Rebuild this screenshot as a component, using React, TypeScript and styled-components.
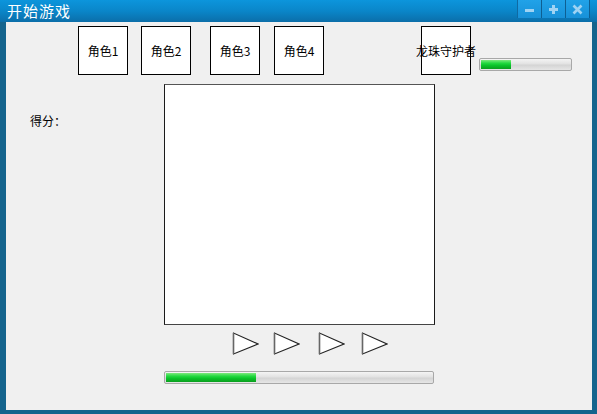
import React from "react";
import styled, { createGlobalStyle } from "styled-components";

const Global = createGlobalStyle`
  html, body { margin: 0; padding: 0; background: #ffffff; }
  body { font-family: "Noto Sans CJK SC", "Noto Sans", sans-serif; }
`;

const Window = styled.div`
  width: 597px;
  height: 414px;
  background: #15648d;
  display: flex;
  flex-direction: column;
  overflow: hidden;
`;

const TitleBar = styled.div`
  height: 22px;
  flex-shrink: 0;
  display: flex;
  justify-content: space-between;
  align-items: flex-start;
  background: linear-gradient(to bottom, #0c95dc 0%, #0a86c9 50%, #0b6ea9 100%);
`;

const Title = styled.div`
  color: #ffffff;
  font-size: 15px;
  line-height: 22px;
  height: 22px;
  letter-spacing: 1px;
  padding-left: 7px;
`;

const Controls = styled.div`
  display: flex;
  height: 18px;
  margin-right: 7px;
  border-left: 1px solid #0f6aa3;
`;

const CtrlButton = styled.div`
  width: 23px;
  height: 18px;
  border-right: 1px solid #0e5f92;
  background: linear-gradient(to bottom, #21a2e8 0%, #1891d8 100%);
  display: flex;
  align-items: center;
  justify-content: center;
`;

const Body = styled.div`
  flex: 1;
  margin: 0 5px 4px 6px;
  background: #f0f0f0;
  display: flex;
  flex-direction: column;
`;

const TopRow = styled.div`
  display: flex;
  align-items: flex-start;
  padding: 4px 0 0 72px;
`;

const RoleBox = styled.div<{ $ml: number }>`
  width: 50px;
  height: 49px;
  box-sizing: border-box;
  margin-left: ${(p) => p.$ml}px;
  border: 1px solid #000000;
  background: #ffffff;
  display: flex;
  align-items: center;
  justify-content: center;
  font-size: 12px;
  color: #000000;
  white-space: nowrap;
  overflow: visible;
  flex-shrink: 0;
`;

const Track = styled.div<{ $w: number; $ml?: number; $mt?: number }>`
  width: ${(p) => p.$w}px;
  height: 13px;
  box-sizing: border-box;
  margin-left: ${(p) => p.$ml ?? 0}px;
  margin-top: ${(p) => p.$mt ?? 0}px;
  border: 1px solid #a8a8a8;
  border-radius: 2px;
  background: linear-gradient(to bottom, #f4f4f4 0%, #e2e2e2 45%, #d4d4d4 55%, #e6e6e6 100%);
  padding: 1px;
  flex-shrink: 0;
`;

const Fill = styled.div`
  height: 100%;
  background: linear-gradient(to bottom, #7ee87e 0%, #23d940 35%, #0bc42a 60%, #0a9e1e 100%);
`;

const Middle = styled.div`
  display: flex;
  align-items: flex-start;
  margin-top: 9px;
`;

const ScoreCol = styled.div`
  width: 158px;
  flex-shrink: 0;
  padding: 29px 0 0 24px;
  box-sizing: border-box;
  font-size: 12px;
  line-height: 16px;
  color: #000000;
`;

const Canvas = styled.div`
  width: 271px;
  height: 241px;
  box-sizing: border-box;
  background: #ffffff;
  border: 1px solid #1a1a1a;
  border-top-color: #555555;
  border-bottom-color: #444444;
`;

const TriRow = styled.div`
  display: flex;
  margin-top: 7px;
  padding-left: 226px;
`;

const TriWrap = styled.div<{ $ml: number }>`
  width: 27px;
  height: 23px;
  margin-left: ${(p) => p.$ml}px;
`;

const BottomRow = styled.div`
  display: flex;
  margin-top: 16px;
`;

const Triangle = () => (
  <svg width="27" height="23" viewBox="0 0 27 23">
    <polygon points="1.5,1 1.5,22 26,12" fill="#ffffff" stroke="#222222" strokeWidth="1.1" />
    <line x1="1.5" y1="1" x2="1.5" y2="22" stroke="#666666" strokeWidth="1.5" />
  </svg>
);

const Bar = ({ w, pct, ml, mt }: { w: number; pct: number; ml?: number; mt?: number }) => (
  <Track $w={w} $ml={ml} $mt={mt}>
    <Fill style={{ width: `${pct}%` }} />
  </Track>
);

const roles = [
  { name: "角色1", ml: 0 },
  { name: "角色2", ml: 13 },
  { name: "角色3", ml: 19 },
  { name: "角色4", ml: 14 },
  { name: "龙珠守护者", ml: 97 },
];

export default function App() {
  return (
    <>
      <Global />
      <Window>
        <TitleBar>
          <Title>开始游戏</Title>
          <Controls>
            <CtrlButton>
              <svg width="11" height="10" viewBox="0 0 11 10">
                <rect x="1" y="5" width="9" height="3" fill="#9fd3f3" />
              </svg>
            </CtrlButton>
            <CtrlButton>
              <svg width="11" height="11" viewBox="0 0 11 11">
                <rect x="4" y="1" width="3" height="9" fill="#9fd3f3" />
                <rect x="1" y="4" width="9" height="3" fill="#9fd3f3" />
              </svg>
            </CtrlButton>
            <CtrlButton>
              <svg width="11" height="11" viewBox="0 0 11 11">
                <path d="M1.5 1.5 L9.5 9.5 M9.5 1.5 L1.5 9.5" stroke="#9fd3f3" strokeWidth="2.6" />
              </svg>
            </CtrlButton>
          </Controls>
        </TitleBar>
        <Body>
          <TopRow>
            {roles.map((r) => (
              <RoleBox key={r.name} $ml={r.ml}>
                {r.name}
              </RoleBox>
            ))}
            <Bar w={93} pct={34} ml={8} mt={32} />
          </TopRow>
          <Middle>
            <ScoreCol>得分：</ScoreCol>
            <Canvas />
          </Middle>
          <TriRow>
            <TriWrap $ml={0}><Triangle /></TriWrap>
            <TriWrap $ml={14}><Triangle /></TriWrap>
            <TriWrap $ml={18}><Triangle /></TriWrap>
            <TriWrap $ml={16}><Triangle /></TriWrap>
          </TriRow>
          <BottomRow>
            <Bar w={270} pct={34} ml={158} />
          </BottomRow>
        </Body>
      </Window>
    </>
  );
}
